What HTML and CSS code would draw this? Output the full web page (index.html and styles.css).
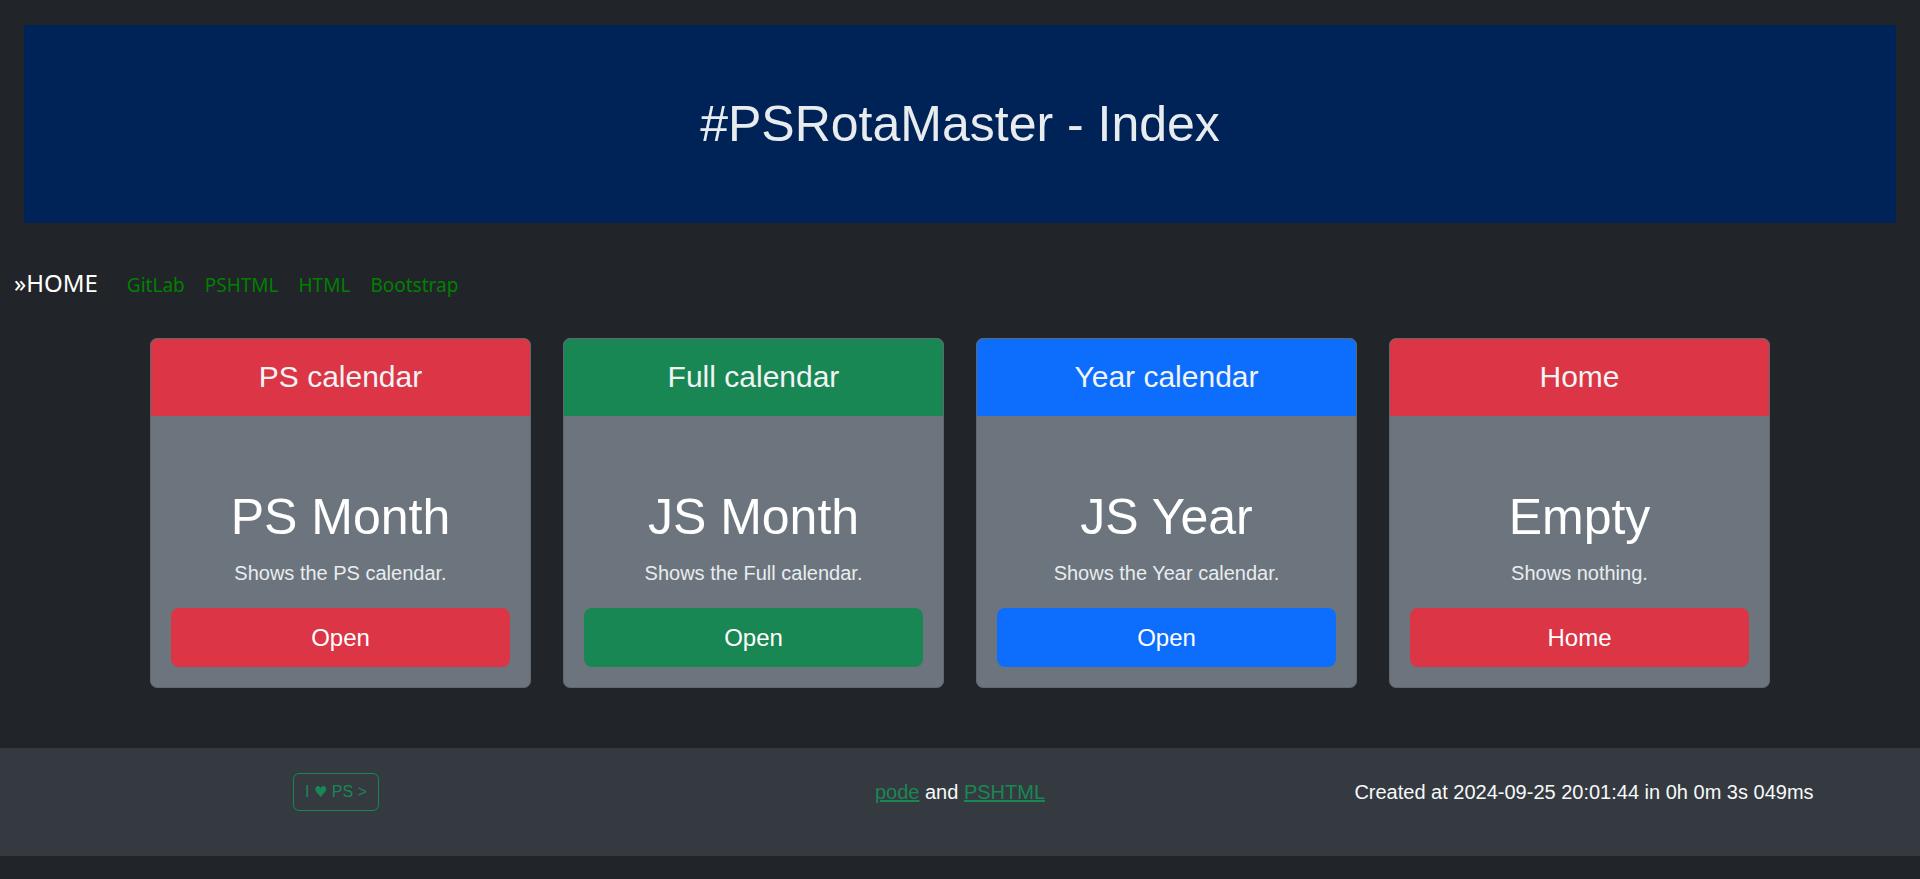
FILE: index.html
```html
<!DOCTYPE html>
<html lang="en">
<head>
<meta charset="utf-8">
<title>#PSRotaMaster - Index</title>
<link rel="stylesheet" href="styles.css">
</head>
<body>
<div class="page">
  <header class="hero">
    <h1 class="hero-title">#PSRotaMaster - Index</h1>
  </header>

  <nav class="topnav">
    <span class="nav-home">»HOME</span>
    <a class="nav-link" href="#">GitLab</a>
    <a class="nav-link" href="#">PSHTML</a>
    <a class="nav-link" href="#">HTML</a>
    <a class="nav-link" href="#">Bootstrap</a>
  </nav>

  <main class="cards">
    <div class="card">
      <div class="card-header bg-red">PS calendar</div>
      <div class="card-body">
        <h2 class="card-title">PS Month</h2>
        <p class="card-text">Shows the PS calendar.</p>
        <a class="card-btn bg-red" href="#">Open</a>
      </div>
    </div>
    <div class="card">
      <div class="card-header bg-green">Full calendar</div>
      <div class="card-body">
        <h2 class="card-title">JS Month</h2>
        <p class="card-text">Shows the Full calendar.</p>
        <a class="card-btn bg-green" href="#">Open</a>
      </div>
    </div>
    <div class="card">
      <div class="card-header bg-blue">Year calendar</div>
      <div class="card-body">
        <h2 class="card-title">JS Year</h2>
        <p class="card-text">Shows the Year calendar.</p>
        <a class="card-btn bg-blue" href="#">Open</a>
      </div>
    </div>
    <div class="card">
      <div class="card-header bg-red">Home</div>
      <div class="card-body">
        <h2 class="card-title">Empty</h2>
        <p class="card-text">Shows nothing.</p>
        <a class="card-btn bg-red" href="#">Home</a>
      </div>
    </div>
  </main>
</div>

<footer class="footer">
  <div class="footer-grid">
    <div class="footer-col"><a class="love-btn" href="#">I <span class="heart">♥</span> PS &gt;</a></div>
    <div class="footer-col"><a class="f-link" href="#">pode</a> and <a class="f-link" href="#">PSHTML</a></div>
    <div class="footer-col">Created at 2024-09-25 20:01:44 in 0h 0m 3s 049ms</div>
  </div>
</footer>
</body>
</html>
```

FILE: styles.css
```css
html, body {
  margin: 0;
  padding: 0;
}

body {
  background: #212529;
  color: #dee2e6;
  font-family: "Liberation Sans", Arial, sans-serif;
  height: 879px;
  overflow: hidden;
}

.page {
  padding: 25px 0 0;
}

.hero {
  margin: 0 24px;
  height: 198px;
  background: #002357;
  display: flex;
  align-items: center;
  justify-content: center;
}

.hero-title {
  margin: 0;
  font-family: "Liberation Sans", Arial, sans-serif;
  font-weight: 400;
  font-size: 50px;
  line-height: 1.2;
  color: #e9ecef;
}

.topnav {
  margin-top: 42px;
  padding-left: 14px;
  display: flex;
  align-items: baseline;
  height: 36px;
  font-family: "Noto Sans", "Open Sans", sans-serif;
}

.nav-home {
  font-size: 24px;
  line-height: 36px;
  color: #ffffff;
  margin-right: 29px;
}

.nav-link {
  font-size: 19px;
  color: #008000;
  text-decoration: none;
  margin-right: 20px;
}

.cards {
  margin-top: 37px;
  display: flex;
  justify-content: center;
  gap: 32px;
}

.card {
  width: 381px;
  box-sizing: border-box;
  border: 1px solid #60676e;
  border-radius: 7px;
  overflow: hidden;
  background: #6c757d;
  display: flex;
  flex-direction: column;
}

.card-header {
  padding: 20px 16px 21px;
  font-size: 30px;
  line-height: 36px;
  text-align: center;
  color: #f1f3f5;
}

.bg-red { background: #dc3545; }
.bg-green { background: #198754; }
.bg-blue { background: #0d6efd; }

.card-body {
  padding: 71px 20px 20px;
  display: flex;
  flex-direction: column;
  align-items: stretch;
  text-align: center;
}

.card-title {
  margin: 0;
  font-size: 50px;
  font-weight: 400;
  line-height: 60px;
  color: #ffffff;
}

.card-text {
  margin: 11px 0 0;
  font-size: 20px;
  line-height: 30px;
  color: #e9ecef;
}

.card-btn {
  margin-top: 20px;
  height: 59px;
  border-radius: 8px;
  display: flex;
  align-items: center;
  justify-content: center;
  font-size: 24px;
  color: #ffffff;
  text-decoration: none;
}

.footer {
  margin-top: 60px;
  background: #343a40;
  padding: 25px 24px 45px;
}

.footer-grid {
  display: grid;
  grid-template-columns: 1fr 1fr 1fr;
  align-items: center;
  height: 38px;
}

.footer-col {
  text-align: center;
  font-size: 20px;
  line-height: 30px;
  color: #f8f9fa;
}

.love-btn {
  display: inline-block;
  border: 1px solid #198754;
  border-radius: 6px;
  padding: 6px 11px;
  font-size: 16px;
  line-height: 24px;
  color: #198754;
  text-decoration: none;
  vertical-align: middle;
}

.heart {
  font-family: "DejaVu Sans", sans-serif;
  font-size: 15px;
}

.f-link {
  color: #198754;
  text-decoration: underline;
}
```
